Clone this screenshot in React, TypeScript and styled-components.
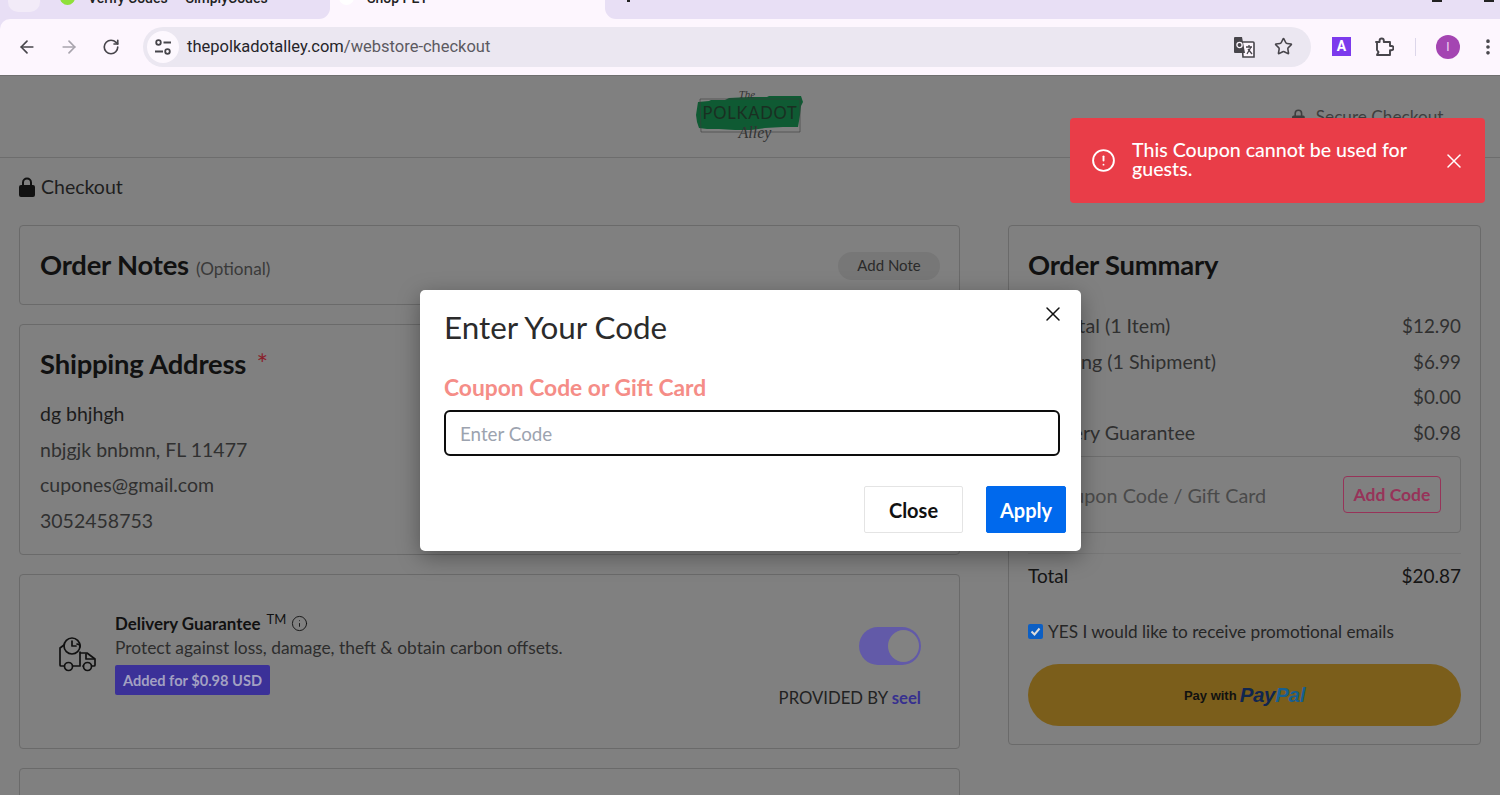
import React from "react";
import styled, { createGlobalStyle } from "styled-components";
import { ArrowLeft, ArrowRight, RotateCw, Star, X, CircleAlert, Info, MoreVertical } from "lucide-react";

const Global = createGlobalStyle`
  html, body { margin: 0; padding: 0; height: 795px; overflow: hidden; background: #808080; }
  * { box-sizing: border-box; }
  body { font-family: "Lato", "Liberation Sans", sans-serif; color: #222; }
`;

const Screen = styled.div`
  position: relative;
  width: 1500px;
  height: 795px;
  overflow: hidden;
  display: flex;
  flex-direction: column;
  background: #e8dff5;
`;

/* Browser chrome */
const TabStrip = styled.div`
  height: 19px;
  flex: none;
  background: #fdf6fe;
  display: flex;
  overflow: hidden;
  position: relative;
`;
const LeftTabs = styled.div`
  width: 330px;
  flex: none;
  height: 19px;
  background: #e8dff5;
  border-bottom-right-radius: 11px;
  display: flex;
  align-items: flex-end;
`;
const RightTabs = styled.div`
  flex: 1;
  height: 19px;
  background: #e8dff5;
  border-bottom-left-radius: 11px;
`;
const TabSearch = styled.div`
  width: 32px;
  height: 30px;
  margin: 0 0 7px 8px;
  border-radius: 10px;
  background: #f2ebf8;
  flex: none;
`;
const Tab = styled.div<{ $active?: boolean; $w: number }>`
  width: ${(p) => p.$w}px;
  height: 36px;
  flex: none;
  align-self: flex-end;
  margin-top: ${(p) => (p.$active ? -17 : 0)}px;
  display: flex;
  align-items: flex-end;
  gap: 13px;
  padding: 0 0 14px ${(p) => (p.$active ? 9 : 20)}px;
  font: 500 14px/14px "Roboto", sans-serif;
  color: #222;
  white-space: nowrap;
`;
const Favicon = styled.span<{ $c: string }>`
  width: 15px;
  height: 15px;
  border-radius: 50%;
  background: ${(p) => p.$c};
  flex: none;
`;
const WindowMark = styled.span<{ $x: number; $w: number }>`
  position: absolute;
  top: 0;
  left: ${(p) => p.$x}px;
  width: ${(p) => p.$w}px;
  height: 2px;
  background: #222;
`;
const Toolbar = styled.div`
  height: 56px;
  flex: none;
  background: #fdf6fe;
  border-top-left-radius: 10px;
  display: flex;
  align-items: center;
  padding: 0 0 1px 16px;
`;
const NavButton = styled.span<{ $off?: boolean }>`
  width: 22px;
  height: 22px;
  margin-right: 20px;
  color: ${(p) => (p.$off ? "#a8a4ad" : "#47454b")};
  display: flex;
  align-items: center;
  justify-content: center;
  flex: none;
`;
const Omnibox = styled.div`
  width: 1168px;
  height: 40px;
  margin-left: 1px;
  border-radius: 20px;
  background: #ebe7f1;
  display: flex;
  align-items: center;
  padding: 0 18px 0 4px;
  flex: none;
`;
const SiteChip = styled.span`
  width: 32px;
  height: 32px;
  border-radius: 50%;
  background: #fdf8fe;
  display: flex;
  align-items: center;
  justify-content: center;
  flex: none;
  margin-right: 8px;
`;
const Url = styled.div`
  flex: 1;
  font: 400 16.5px "Roboto", sans-serif;
  color: #5c5a61;
  white-space: nowrap;
  b { font-weight: 400; color: #26252a; }
`;
const OmniIcons = styled.div`
  display: flex;
  align-items: center;
  gap: 19px;
  color: #47454b;
`;
const ToolIcons = styled.div`
  display: flex;
  align-items: center;
  margin-left: 21px;
  color: #47454b;
`;
const ExtA = styled.span`
  width: 19px;
  height: 19px;
  background: #7c3aed;
  color: #fff;
  font: 700 14px/19px "Roboto", sans-serif;
  text-align: center;
  flex: none;
`;
const ToolGap = styled.span<{ $w: number }>`
  width: ${(p) => p.$w}px;
  flex: none;
`;
const ToolSep = styled.span`
  width: 1px;
  height: 18px;
  background: #dcd6ea;
  margin: 0 20px 0 21px;
`;
const Avatar = styled.span`
  width: 24px;
  height: 24px;
  border-radius: 50%;
  background: #a445b2;
  color: #f2d8f5;
  font: 400 12px/24px "Roboto", sans-serif;
  text-align: center;
  flex: none;
`;

/* Page */
const Page = styled.div`
  flex: 1;
  background: #808080;
  border-top: 1px solid #6f6f6f;
  display: flex;
  flex-direction: column;
  min-height: 0;
`;
const SiteHeader = styled.header`
  height: 82px;
  flex: none;
  border-bottom: 1px solid #6d6d6d;
  display: flex;
  align-items: center;
  justify-content: center;
  position: relative;
`;
const Secure = styled.div`
  position: absolute;
  left: 1292px;
  top: 30px;
  display: flex;
  align-items: center;
  gap: 11px;
  font-size: 17.2px;
  color: #3e3e3e;
`;
const CheckoutRow = styled.div`
  height: 67px;
  flex: none;
  padding: 0 0 10px 19px;
  display: flex;
  align-items: center;
  gap: 6px;
  font-size: 19.5px;
  color: #1e1e1e;
`;
const Columns = styled.div`
  display: grid;
  grid-template-columns: 941px 473px;
  column-gap: 48px;
  padding-left: 19px;
  align-items: start;
`;
const LeftColumn = styled.div`
  display: flex;
  flex-direction: column;
  gap: 19px;
`;
const Card = styled.section<{ $h: number }>`
  height: ${(p) => p.$h}px;
  border: 1px solid #6a6a6a;
  border-radius: 4px;
`;
const NotesCard = styled(Card)`
  display: flex;
  align-items: center;
  justify-content: space-between;
  padding: 0 19px 0 20px;
`;
const Title = styled.h2`
  margin: 0 0 2px;
  font-size: 27.4px;
  font-weight: 700;
  color: #111;
  letter-spacing: -0.2px;
  white-space: nowrap;
  small { font-size: 17.2px; font-weight: 400; color: #3a3a3a; margin-left: 7px; letter-spacing: 0; }
  em { font-style: normal; color: #8a1f2b; font-weight: 400; margin-left: 4px; }
`;
const AddNote = styled.span`
  width: 102px;
  height: 28px;
  margin-top: 2px;
  padding-bottom: 2px;
  border-radius: 14px;
  background: #777;
  color: #2a2a2a;
  font-size: 15px;
  display: flex;
  align-items: center;
  justify-content: center;
`;
const ShippingCard = styled(Card)`
  padding: 22px 20px 0;
`;
const AddressLines = styled.div`
  margin-top: 16px;
  display: flex;
  flex-direction: column;
  font-size: 19.5px;
  line-height: 35.5px;
  color: #303030;
`;
const AddressName = styled.div`
  color: #1c1c1c;
`;
const GuaranteeCard = styled(Card)`
  display: flex;
  justify-content: space-between;
  padding: 37px 38px 0 38px;
`;
const GuaranteeLeft = styled.div`
  display: flex;
  align-items: center;
  align-self: flex-start;
  gap: 17px;
`;
const GuaranteeBody = styled.div`
  display: flex;
  flex-direction: column;
  align-items: flex-start;
`;
const GuaranteeTitle = styled.div`
  display: flex;
  align-items: center;
  height: 24px;
  padding-bottom: 2px;
  font-size: 16.9px;
  font-weight: 700;
  color: #111;
  sup { font-size: 13px; font-weight: 400; margin: 0 5px 0 6px; line-height: 1; position: relative; top: -4px; }
`;
const GuaranteeText = styled.div`
  font-size: 17.4px;
  line-height: 24px;
  color: #2d2d2d;
  white-space: nowrap;
`;
const PriceBadge = styled.span`
  margin-top: 5px;
  height: 30px;
  width: 155px;
  border-radius: 2px;
  background: #3b3198;
  color: #a3a1c2;
  font-size: 14.6px;
  font-weight: 700;
  display: flex;
  align-items: center;
  justify-content: center;
  white-space: nowrap;
`;
const GuaranteeRight = styled.div`
  display: flex;
  flex-direction: column;
  align-items: flex-end;
  margin-top: 15px;
`;
const Toggle = styled.span`
  width: 62px;
  height: 38px;
  border-radius: 19px;
  background: #625aa8;
  display: flex;
  align-items: center;
  justify-content: flex-end;
  padding-right: 2px;
`;
const Knob = styled.span`
  width: 31px;
  height: 32px;
  border-radius: 50%;
  background: #828282;
`;
const Provided = styled.div`
  margin-top: 23px;
  font-size: 16.7px;
  color: #222;
  white-space: nowrap;
  b { color: #37308f; font-weight: 700; }
`;

const SummaryCard = styled(Card)`
  padding: 22px 19px 0 19px;
`;
const SummaryRows = styled.div`
  margin-top: 27px;
`;
const SummaryRow = styled.div`
  height: 35.5px;
  display: flex;
  align-items: center;
  justify-content: space-between;
  font-size: 19.7px;
  color: #303030;
`;
const Price = styled.span`
  font-size: 18.8px;
`;
const CouponBox = styled.div`
  height: 77px;
  margin-top: 6px;
  border: 1px solid #6e6e6e;
  border-radius: 4px;
  display: flex;
  align-items: center;
  justify-content: space-between;
  padding: 0 19px 0 20px;
  font-size: 19.8px;
  color: #4a4a4a;
`;
const AddCode = styled.span`
  width: 98px;
  height: 37px;
  border: 1px solid #973359;
  border-radius: 4px;
  color: #973359;
  font-size: 17.5px;
  font-weight: 700;
  display: flex;
  align-items: center;
  justify-content: center;
`;
const TotalRow = styled.div`
  margin-top: 20px;
  border-top: 1px solid #777;
  height: 41px;
  display: flex;
  align-items: center;
  justify-content: space-between;
  font-size: 19px;
  color: #151515;
  padding-top: 3px;
  b { font-weight: 400; }
`;
const EmailRow = styled.label`
  margin-top: 25px;
  height: 24px;
  display: flex;
  align-items: center;
  gap: 5px;
  font-size: 17.2px;
  color: #262626;
  white-space: nowrap;
`;
const FakeCheck = styled.span`
  width: 15px;
  height: 15px;
  border-radius: 2px;
  background: #0c5fc4;
  display: flex;
  align-items: center;
  justify-content: center;
  flex: none;
`;
const PayPalButton = styled.div`
  margin-top: 21px;
  height: 62px;
  border-radius: 31px;
  background: #7b5e1b;
  display: flex;
  align-items: center;
  justify-content: center;
  gap: 3px;
  font: 700 13px "Liberation Sans", sans-serif;
  color: #111;
`;
const PayPalWord = styled.span`
  font: italic 700 20.5px "Liberation Sans", sans-serif;
  letter-spacing: -0.3px;
  color: #10264f;
  i { color: #175f91; font-style: inherit; }
`;

/* Overlays */
const Toast = styled.div`
  position: absolute;
  left: 1070px;
  top: 118px;
  width: 415px;
  height: 85px;
  border-radius: 4px;
  background: #e93d48;
  color: #fff;
  display: flex;
  align-items: center;
  padding: 0 19px 0 21px;
  gap: 16px;
  font-size: 19.6px;
  line-height: 19px;
  font-weight: 500;
`;
const ToastText = styled.div`
  flex: 1;
  padding-bottom: 3px;
`;
const Modal = styled.div`
  position: absolute;
  left: 420px;
  top: 290px;
  width: 661px;
  height: 261px;
  background: #fff;
  border-radius: 5px;
  box-shadow: 0 6px 22px rgba(0, 0, 0, 0.35);
  padding: 19px 15px 0 24px;
  display: flex;
  flex-direction: column;
`;
const ModalHead = styled.div`
  display: flex;
  justify-content: space-between;
  align-items: flex-start;
`;
const ModalTitle = styled.h3`
  margin: 0;
  font-size: 31.4px;
  line-height: 36px;
  font-weight: 400;
  color: #2b2b2b;
`;
const ModalClose = styled.span`
  color: #111;
  margin: -7px 1px 0 0;
  display: flex;
`;
const FieldLabel = styled.div`
  margin-top: 29px;
  font-size: 22.8px;
  line-height: 26px;
  font-weight: 700;
  color: #f58d87;
`;
const CodeInput = styled.input`
  margin: 10px 6px 0 0;
  height: 46px;
  border: 2.5px solid #0d0d0d;
  border-radius: 6px;
  padding: 0 14px;
  font: 400 18.8px "Lato", sans-serif;
  outline: none;
  &::placeholder { color: #9ca3af; opacity: 1; }
`;
const ModalActions = styled.div`
  margin-top: 30px;
  display: flex;
  justify-content: flex-end;
  gap: 23px;
`;
const ModalButton = styled.button<{ $primary?: boolean }>`
  height: 47px;
  width: ${(p) => (p.$primary ? 80 : 99)}px;
  border-radius: 2px;
  border: 1px solid ${(p) => (p.$primary ? "#0069ed" : "#e4e4e4")};
  background: ${(p) => (p.$primary ? "#0069ed" : "#fff")};
  color: ${(p) => (p.$primary ? "#fff" : "#111")};
  font: 700 20px "Lato", sans-serif;
  padding: 0;
`;

const Lock = ({ size, color }: { size: number; color: string }) => (
  <svg width={size * 0.8} height={size} viewBox="0 0 16 20" fill={color}>
    <path d="M3 8V5.5a5 5 0 0 1 10 0V8h1a2 2 0 0 1 2 2v8a2 2 0 0 1-2 2H2a2 2 0 0 1-2-2v-8a2 2 0 0 1 2-2h1Zm2 0h6V5.5a3 3 0 0 0-6 0V8Z" />
  </svg>
);

const Tune = () => (
  <svg width="18" height="18" viewBox="0 0 18 18" fill="none" stroke="#47454b" strokeWidth="1.8">
    <circle cx="4.5" cy="4.5" r="2.3" />
    <path d="M9.5 4.5H17M1 13.5h8" />
    <circle cx="13.5" cy="13.5" r="2.3" />
  </svg>
);

const Translate = () => (
  <svg width="22" height="22" viewBox="0 0 22 22">
    <path d="M9 6h11a1 1 0 0 1 1 1v14H10z" fill="#fdf6fe" stroke="#47454b" strokeWidth="1.6" />
    <path d="M1 2a1 1 0 0 1 1-1h7l3 16H2a1 1 0 0 1-1-1z" fill="#47454b" />
    <circle cx="6.5" cy="9" r="2.6" fill="none" stroke="#fdf6fe" strokeWidth="1.3" />
    <path d="M13 11h6M16 9v2M14 18l4-7M15 13l4 5" fill="none" stroke="#47454b" strokeWidth="1.3" />
  </svg>
);

const Puzzle = () => (
  <svg width="20" height="20" viewBox="0 0 20 20" fill="none" stroke="#47454b" strokeWidth="1.9" strokeLinejoin="round">
    <path d="M2 5h3.6V3.6a2.1 2.1 0 0 1 4.2 0V5H16v4h1.4a2.1 2.1 0 0 1 0 4.2H16V18H3l1.5-3L3 13V5z" />
  </svg>
);

const TruckClock = () => (
  <svg width="40" height="36" viewBox="0 0 40 36" fill="none" stroke="#111" strokeWidth="1.7" strokeLinejoin="round" strokeLinecap="round">
    <path d="M6 9 2 12v17a1 1 0 0 0 1 1h3M15 30h7M22 30V16M22 17h7l8 6v6a1 1 0 0 1-1 1h-2M25 30h0" />
    <path d="M22 11V9l-3-1" />
    <circle cx="14" cy="10" r="8" />
    <path d="M14 5v5h4" />
    <circle cx="10.500" cy="30.500" r="4" />
    <circle cx="29.500" cy="30.500" r="4" />
    <path d="M28 18v5h8" />
  </svg>
);

const Logo = () => (
  <svg width="110" height="54" viewBox="0 0 110 54" style={{ marginBottom: 2 }}>
    <path d="M3 13 L14 12 L16 11 L30 11 L34 9 L55 8 L72 8 L74 7 L106 7 L108 13 L106 17 L105 26 L103 38 L88 38 L70 39 L56 41 L40 41 L24 40 L12 40 L4 39 L2 33 L1 26 Z" fill="#0f5a33" />
    <path d="M5 10H105V43H6Z" fill="none" stroke="#3a3a3a" strokeWidth="0.6" />
    <text x="55" y="30" textAnchor="middle" fontFamily="Lato, sans-serif" fontWeight="400" fontSize="16.5" letterSpacing="0.8" fill="#1a2f22">POLKADOT</text>
    <text x="52" y="9" textAnchor="middle" fontFamily="'Liberation Serif', serif" fontStyle="italic" fontSize="11" fill="#333">The</text>
    <text x="60" y="49" textAnchor="middle" fontFamily="'Liberation Serif', serif" fontStyle="italic" fontSize="16" fill="#333">Alley</text>
  </svg>
);

export default function App() {
  return (
    <Screen>
      <Global />
      <TabStrip>
        <LeftTabs>
          <TabSearch />
          <Tab $w={290}>
            <Favicon $c="#8fe03a" />
            <span>Verify Codes — SimplyCodes</span>
          </Tab>
        </LeftTabs>
        <Tab $w={275} $active>
          <Favicon $c="#ffffff" />
          <span>Shop PET</span>
        </Tab>
        <RightTabs />
        <WindowMark $x={627} $w={3} />
        <WindowMark $x={1432} $w={10} />
        <WindowMark $x={1484} $w={10} />
      </TabStrip>
      <Toolbar>
        <NavButton><ArrowLeft size={20} strokeWidth={2} /></NavButton>
        <NavButton $off><ArrowRight size={20} strokeWidth={2} /></NavButton>
        <NavButton><RotateCw size={18} strokeWidth={2.2} /></NavButton>
        <Omnibox>
          <SiteChip><Tune /></SiteChip>
          <Url><b>thepolkadotalley.com</b>/webstore-checkout</Url>
          <OmniIcons>
            <Translate />
            <Star size={19} strokeWidth={2} />
          </OmniIcons>
        </Omnibox>
        <ToolIcons>
          <ExtA>A</ExtA>
          <ToolGap $w={23} />
          <Puzzle />
          <ToolSep />
          <Avatar>I</Avatar>
          <ToolGap $w={18} />
          <MoreVertical size={20} strokeWidth={2.4} />
        </ToolIcons>
      </Toolbar>
      <Page>
        <SiteHeader>
          <Logo />
          <Secure>
            <Lock size={16} color="#3e3e3e" />
            <span>Secure Checkout</span>
          </Secure>
        </SiteHeader>
        <CheckoutRow>
          <Lock size={20} color="#111" />
          <span>Checkout</span>
        </CheckoutRow>
        <Columns>
          <LeftColumn>
            <NotesCard $h={80}>
              <Title>Order Notes<small>(Optional)</small></Title>
              <AddNote>Add Note</AddNote>
            </NotesCard>
            <ShippingCard $h={231}>
              <Title>Shipping Address <em>*</em></Title>
              <AddressLines>
                <AddressName>dg bhjhgh</AddressName>
                <div>nbjgjk bnbmn, FL 11477</div>
                <div>cupones@gmail.com</div>
                <div>3052458753</div>
              </AddressLines>
            </ShippingCard>
            <GuaranteeCard $h={175}>
              <GuaranteeLeft>
                <TruckClock />
                <GuaranteeBody>
                  <GuaranteeTitle>
                    Delivery Guarantee<sup>TM</sup>
                    <Info size={17} strokeWidth={1.3} />
                  </GuaranteeTitle>
                  <GuaranteeText>Protect against loss, damage, theft &amp; obtain carbon offsets.</GuaranteeText>
                  <PriceBadge>Added for $0.98 USD</PriceBadge>
                </GuaranteeBody>
              </GuaranteeLeft>
              <GuaranteeRight>
                <Toggle><Knob /></Toggle>
                <Provided>PROVIDED BY <b>seel</b></Provided>
              </GuaranteeRight>
            </GuaranteeCard>
            <Card $h={60} />
          </LeftColumn>
          <SummaryCard $h={520}>
            <Title>Order Summary</Title>
            <SummaryRows>
              <SummaryRow><span>Subtotal (1 Item)</span><Price>$12.90</Price></SummaryRow>
              <SummaryRow><span>Shipping (1 Shipment)</span><Price>$6.99</Price></SummaryRow>
              <SummaryRow><span>Tax</span><Price>$0.00</Price></SummaryRow>
              <SummaryRow><span>Delivery Guarantee</span><Price>$0.98</Price></SummaryRow>
            </SummaryRows>
            <CouponBox>
              <span>Coupon Code / Gift Card</span>
              <AddCode>Add Code</AddCode>
            </CouponBox>
            <TotalRow><span>Total</span><b>$20.87</b></TotalRow>
            <EmailRow>
              <FakeCheck>
                <svg width="11" height="11" viewBox="0 0 11 11" fill="none" stroke="#ddd" strokeWidth="2"><path d="M1.500 5.500 4.500 8.500 9.500 2.500" /></svg>
              </FakeCheck>
              YES I would like to receive promotional emails
            </EmailRow>
            <PayPalButton>
              <span>Pay with</span>
              <PayPalWord>Pay<i>Pal</i></PayPalWord>
            </PayPalButton>
          </SummaryCard>
        </Columns>
      </Page>
      <Toast>
        <CircleAlert size={25} strokeWidth={1.8} />
        <ToastText>This Coupon cannot be used for guests.</ToastText>
        <X size={24} strokeWidth={1.5} />
      </Toast>
      <Modal>
        <ModalHead>
          <ModalTitle>Enter Your Code</ModalTitle>
          <ModalClose><X size={24} strokeWidth={1.5} /></ModalClose>
        </ModalHead>
        <FieldLabel>Coupon Code or Gift Card</FieldLabel>
        <CodeInput placeholder="Enter Code" />
        <ModalActions>
          <ModalButton>Close</ModalButton>
          <ModalButton $primary>Apply</ModalButton>
        </ModalActions>
      </Modal>
    </Screen>
  );
}
